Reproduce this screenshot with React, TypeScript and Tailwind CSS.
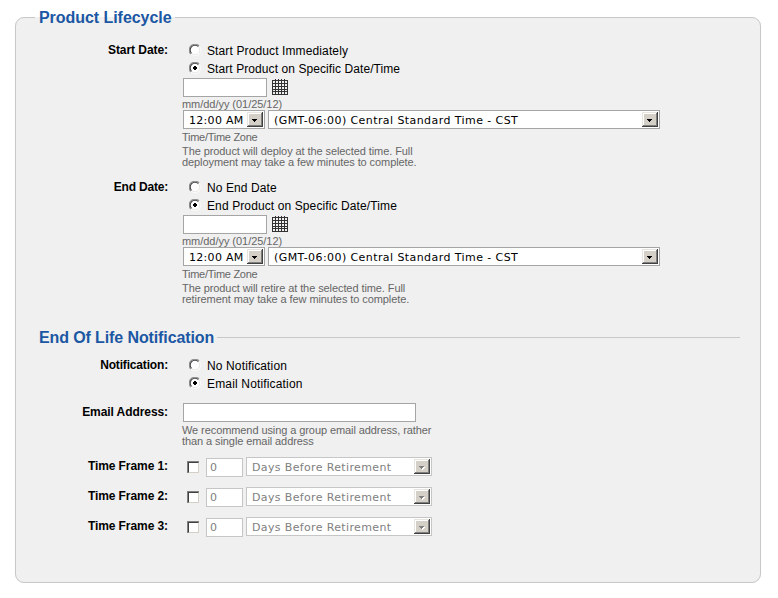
import React from 'react';

const hint = 'block whitespace-nowrap text-[11px] text-[#666]';

function Radio({ label, on, cls }: { label: string; on?: boolean; cls: string }) {
  return (
    <div className="flex h-[18px] items-center pl-[6px]">
      <svg width="12" height="12" viewBox="0 0 12 12" className="mr-[6px] shrink-0">
        <circle cx="6" cy="6" r="5.9" fill="#fff" />
        <path d="M1.9 10.1A5.7 5.7 0 0 1 10.1 1.9" fill="none" stroke="#929292" strokeWidth="1.1" />
        <path d="M2.6 9.4A4.8 4.8 0 0 1 9.4 2.6" fill="none" stroke="#444" strokeWidth="1.1" />
        <path d="M2.6 9.4A4.8 4.8 0 0 0 9.4 2.6" fill="none" stroke="#dedbd5" strokeWidth="0.7" />
        {on && <path d="M5 4h2v1h1v2h-1v1h-2v-1h-1v-2h1z" fill="#000" shapeRendering="crispEdges" />}
      </svg>
      <span className={`relative top-[1px] whitespace-nowrap text-[12px] leading-[18px] text-black ${cls}`}>{label}</span>
    </div>
  );
}

function Row({ label, cls, className, children }: { label: string; cls: string; className: string; children: React.ReactNode }) {
  return (
    <div className={`flex ${className}`}>
      <div className={`w-[152px] shrink-0 text-right text-[12px] leading-[18px] font-bold whitespace-nowrap text-black ${cls}`}>{label}</div>
      <div className="ml-[15px]">{children}</div>
    </div>
  );
}

function Select({ text, width, cls, disabled }: { text: string; width: string; cls: string; disabled?: boolean }) {
  return (
    <div className={`flex h-[19px] items-center justify-between border bg-white pr-px pl-[5px] ${width} ${disabled ? 'border-[#c6c6c6]' : 'border-[#a5a5a5]'}`}>
      <span className={`relative top-px whitespace-nowrap font-['DejaVu_Sans',sans-serif] text-[11px] leading-[17px] ${disabled ? 'text-[#808080]' : 'text-black'} ${cls}`}>{text}</span>
      <svg width="16" height="15" viewBox="0 0 16 15" shapeRendering="crispEdges" className="shrink-0">
        <rect width="16" height="15" fill="#404040" />
        <rect width="15" height="14" fill="#e8e5df" />
        <rect x="1" y="1" width="14" height="13" fill="#808080" />
        <rect x="1" y="1" width="13" height="12" fill="#fff" />
        <rect x="2" y="2" width="12" height="11" fill="#d4d0c8" />
        {disabled && <path d="M6 8h5v1h-1v1h-1v1h-1v-1h-1v-1h-1z" fill="#fff" />}
        <path d="M5 7h5v1h-1v1h-1v1h-1v-1h-1v-1h-1z" fill={disabled ? '#808080' : '#000'} />
      </svg>
    </div>
  );
}

function Calendar() {
  return (
    <svg width="16" height="16" viewBox="0 0 16 16" shapeRendering="crispEdges" className="mt-px ml-[5px]">
      <path d="M0 1h16v15H0z" fill="#333" />
      <path d="M3 0h1v1h-1zM6 0h1v1h-1zM9 0h1v1h-1zM12 0h1v1h-1z" fill="#333" />
      {[2, 5, 8, 11, 13].map((y) =>
        [1, 4, 7, 10, 13].map((x) => <rect key={`${x}-${y}`} x={x} y={y} width="2" height={y === 11 ? 1 : 2} fill="#f0f0f0" />),
      )}
    </svg>
  );
}

function Schedule({ first, second, firstCls, secondCls, lines }: { first: string; second: string; firstCls: string; secondCls: string; lines: [string, string] }) {
  return (
    <>
      <Radio label={first} cls={firstCls} />
      <Radio label={second} cls={secondCls} on />
      <div className="mt-px flex h-[19px] items-start">
        <div className="h-[19px] w-[84px] border border-[#a5a5a5] bg-white" />
        <Calendar />
      </div>
      <span className={`${hint} -ml-px h-[13px] leading-[14px] tracking-[-0.04px]`}>mm/dd/yy (01/25/12)</span>
      <div className="flex gap-[3px]">
        <Select text="12:00 AM" width="w-[82px]" cls="tracking-[0.3px]" />
        <Select text="(GMT-06:00) Central Standard Time - CST" width="w-[392px]" cls="tracking-[0.42px]" />
      </div>
      <span className={`${hint} -ml-px h-[17px] leading-[17px] tracking-[-0.28px]`}>Time/Time Zone</span>
      <span className={`${hint} -ml-px leading-[11px] tracking-[-0.085px]`}>{lines[0]}</span>
      <span className={`${hint} -ml-px leading-[11px] tracking-[-0.085px]`}>{lines[1]}</span>
    </>
  );
}

function TimeFrame({ n }: { n: number }) {
  return (
    <Row label={`Time Frame ${n}:`} cls="tracking-[-0.08px]" className="h-[30px]">
      <div className="flex pl-1">
        <div className="mt-1 h-3 w-3 border-t border-l border-[#808080] bg-white">
          <div className="h-[11px] w-[11px] border-t border-r border-b border-l border-t-[#404040] border-r-[#d4d0c8] border-b-[#d4d0c8] border-l-[#404040]" />
        </div>
        <div className="mt-px ml-[7px] h-[19px] w-[37px] border border-[#c6c6c6] bg-white pl-[3px] font-['DejaVu_Sans',sans-serif] text-[11px] leading-[17px] text-[#808080]">0</div>
        <div className="ml-[3px]">
          <Select text="Days Before Retirement" width="w-[186px]" cls="tracking-[0.36px]" disabled />
        </div>
      </div>
    </Row>
  );
}

const title = 'whitespace-nowrap text-[16px] leading-[21px] font-bold text-[#1b57a3]';

export default function App() {
  return (
    <div className="h-[598px] w-[778px] overflow-hidden bg-white pt-[7px] pl-[15px] font-['Liberation_Sans',Arial,sans-serif]">
      <fieldset className="h-[576px] w-[746px] rounded-[9px] border border-[#c8c8c8] bg-[#f0f0f0]">
        <legend className={`ml-[19px] h-[21px] pr-[3px] pl-1 tracking-[-0.05px] ${title}`}>Product Lifecycle</legend>
        <Row label="Start Date:" cls="tracking-[-0.06px]" className="mt-[13px] h-[137px]">
          <Schedule
            first="Start Product Immediately"
            second="Start Product on Specific Date/Time"
            firstCls="tracking-[0.12px]"
            secondCls="tracking-[0.08px]"
            lines={['The product will deploy at the selected time. Full', 'deployment may take a few minutes to complete.']}
          />
        </Row>
        <Row label="End Date:" cls="tracking-[-0.2px]" className="h-[137px]">
          <Schedule
            first="No End Date"
            second="End Product on Specific Date/Time"
            firstCls="tracking-[0.09px]"
            secondCls="tracking-[0.11px]"
            lines={['The product will retire at the selected time. Full', 'retirement may take a few minutes to complete.']}
          />
        </Row>
        <div className="mt-[12px] mr-[20px] ml-[23px] flex h-[21px] items-center gap-[3px]">
          <span className={`tracking-[-0.11px] ${title}`}>End Of Life Notification</span>
          <div className="h-px flex-1 bg-[#c8c8c8]" />
        </div>
        <Row label="Notification:" cls="tracking-[-0.17px]" className="mt-2 h-[47px]">
          <Radio label="No Notification" cls="tracking-[0.13px]" />
          <Radio label="Email Notification" cls="tracking-[0.16px]" on />
        </Row>
        <Row label="Email Address:" cls="tracking-[-0.08px]" className="h-[54px]">
          <div className="h-[19px] w-[233px] border border-[#a5a5a5] bg-white" />
          <span className={`${hint} -ml-px mt-[3px] leading-[11px] tracking-[-0.085px]`}>We recommend using a group email address, rather</span>
          <span className={`${hint} -ml-px leading-[11px] tracking-[-0.085px]`}>than a single email address</span>
        </Row>
        {[1, 2, 3].map((n) => (
          <TimeFrame key={n} n={n} />
        ))}
      </fieldset>
    </div>
  );
}
